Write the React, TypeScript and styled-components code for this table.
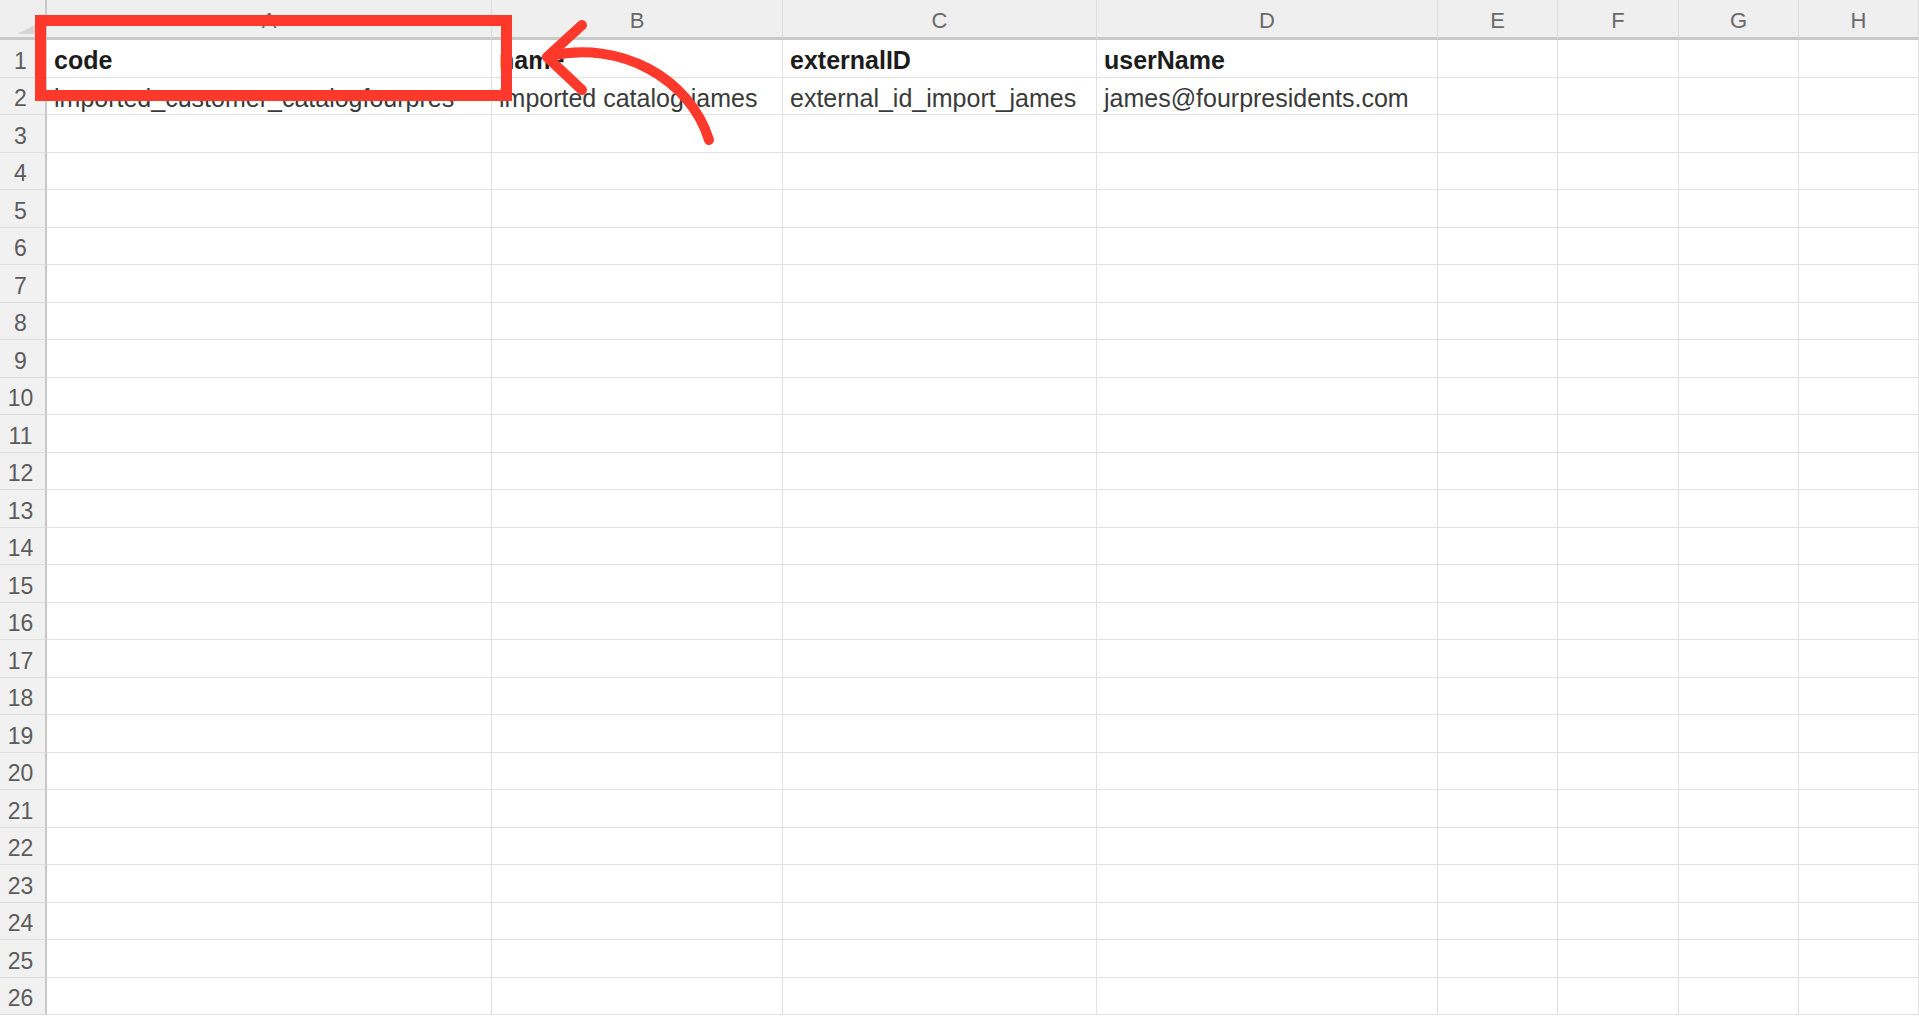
import { Fragment } from "react";
import styled, { createGlobalStyle } from "styled-components";

const GlobalStyle = createGlobalStyle`
  html, body {
    margin: 0;
    padding: 0;
    background: #ffffff;
    overflow: hidden;
  }
  body {
    font-family: "Liberation Sans", Arial, sans-serif;
  }
`;

const COLUMNS = ["A", "B", "C", "D", "E", "F", "G", "H"];
const ROW_COUNT = 26;

const rows: Record<number, { text: string; bold?: boolean }[]> = {
  1: [
    { text: "code", bold: true },
    { text: "name", bold: true },
    { text: "externalID", bold: true },
    { text: "userName", bold: true },
  ],
  2: [
    { text: "imported_customer_catalogfourpres" },
    { text: "imported catalog james" },
    { text: "external_id_import_james" },
    { text: "james@fourpresidents.com" },
  ],
};

const Page = styled.div`
  position: relative;
  width: 100vw;
  height: 100vh;
  overflow: hidden;
  background: #fff;
`;

const Sheet = styled.div`
  display: grid;
  grid-template-columns: 47px 445px 291px 314px 341px 120px 121px 120px 1fr;
  grid-template-rows: 40px repeat(${ROW_COUNT}, 37.5px);
`;

const Corner = styled.div`
  background: #efefef;
  border-bottom: 3px solid #c9c9c9;
  border-right: 2px solid #c9c9c9;
  display: flex;
  align-items: flex-end;
  justify-content: flex-end;
  padding: 0 2px 3px 0;
`;

const ColHeader = styled.div`
  background: #efefef;
  border-bottom: 3px solid #c9c9c9;
  border-right: 1px solid #dcdcdc;
  color: #6a6a6a;
  font-size: 22px;
  line-height: 1;
  display: flex;
  align-items: center;
  justify-content: center;
  padding-top: 4px;
`;

const RowHeader = styled.div`
  background: #f1f1f1;
  border-right: 2px solid #c9c9c9;
  border-bottom: 1px solid #dedede;
  color: #5c5c5c;
  font-size: 23px;
  display: flex;
  align-items: flex-end;
  justify-content: center;
  padding: 0 4px 4px 0;
  line-height: 1;
`;

const Cell = styled.div<{ $bold?: boolean }>`
  border-right: 1px solid #e1e1e1;
  border-bottom: 1px solid #e1e1e1;
  overflow: hidden;
  white-space: nowrap;
  display: flex;
  align-items: flex-end;
  padding: 0 0 2px 7px;
  font-size: 25px;
  line-height: 1.1;
  font-weight: ${(p) => (p.$bold ? 700 : 400)};
  color: ${(p) => (p.$bold ? "#1c1c1c" : "#3a3a3a")};
`;

const Annotation = styled.svg`
  position: absolute;
  top: 0;
  left: 0;
  width: 100%;
  height: 100%;
  pointer-events: none;
`;

const SelectAll = () => (
  <svg width="26" height="13" viewBox="0 0 26 13">
    <polygon points="26,0 26,13 0,13" fill="#d6d6d6" />
  </svg>
);

export default function App() {
  return (
    <Page>
      <GlobalStyle />
      <Sheet>
        <Corner>
          <SelectAll />
        </Corner>
        {COLUMNS.map((c) => (
          <ColHeader key={c}>{c}</ColHeader>
        ))}
        {Array.from({ length: ROW_COUNT }, (_, i) => i + 1).map((r) => (
          <Fragment key={r}>
            <RowHeader>{r}</RowHeader>
            {COLUMNS.map((c, ci) => {
              const cell = rows[r]?.[ci];
              return (
                <Cell key={c} $bold={cell?.bold}>
                  {cell?.text}
                </Cell>
              );
            })}
          </Fragment>
        ))}
      </Sheet>
      <Annotation viewBox="0 0 1919 1017" preserveAspectRatio="none">
        <rect
          x="40.5"
          y="20.5"
          width="466"
          height="75"
          fill="none"
          stroke="#ff382c"
          strokeWidth="11"
        />
        <path
          d="M 550 56 C 620 40, 690 78, 709 140"
          fill="none"
          stroke="#ff382c"
          strokeWidth="10"
          strokeLinecap="round"
        />
        <path
          d="M 582 25 L 547 57 L 582 90"
          fill="none"
          stroke="#ff382c"
          strokeWidth="10"
          strokeLinecap="round"
          strokeLinejoin="round"
        />
      </Annotation>
    </Page>
  );
}
